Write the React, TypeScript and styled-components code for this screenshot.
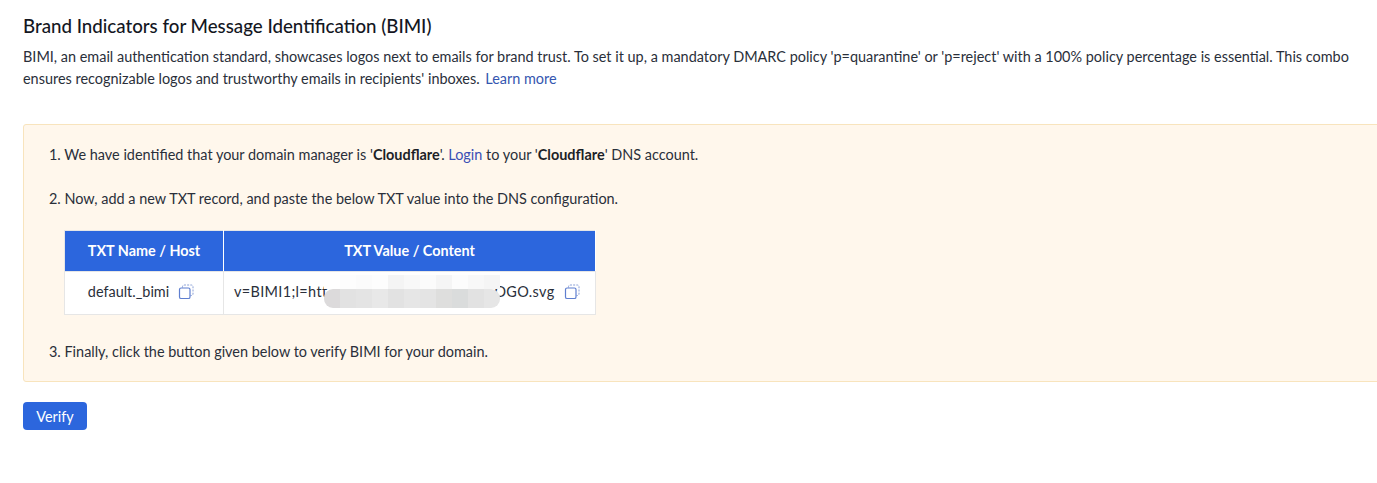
import styled, { createGlobalStyle } from "styled-components";

const GlobalStyle = createGlobalStyle`
  html, body {
    margin: 0;
    padding: 0;
    background: #fff;
    overflow: hidden;
  }
  body {
    font-family: Lato, "Open Sans", sans-serif;
    font-size: 14.45px;
    color: #2a2f3a;
  }
`;

// colours picked from the mosaic over the secret part of the value
const topTiles = ["#ffffff", "#fdfdfd", "#fbfbfb", "#fdfdfd", "#f4f4f4", "#f8f8f8", "#fbfbfb", "#f5f5f5", "#fcfcfc", "#f8f8f8", "#f5f5f5"];
const bottomTiles = ["#dcdadb", "#e2e2e2", "#e4e4e4", "#e8e8e8", "#e2e2e2", "#e6e6e6", "#e4e4e4", "#dededd", "#dadcdc", "#e2e2e2", "#e6e6e6"];

const CopyIcon = () => (
  <CopyGlyph width="16" height="16" viewBox="0 0 16 16" fill="none">
    <path
      d="M4.5 3.5V2.6C4.5 1.7 5.2 1 6.1 1H13.4C14.3 1 15 1.7 15 2.6V10C15 10.9 14.3 11.5 13.4 11.5H12.5"
      stroke="#8a9fd6"
      strokeWidth="1"
      strokeDasharray="2 1.2"
    />
    <rect x="1.5" y="4" width="10.5" height="10.5" rx="1.6" stroke="#5f7fd0" strokeWidth="1.2" />
  </CopyGlyph>
);

export default function App() {
  return (
    <Page>
      <GlobalStyle />
      <Title>Brand Indicators for Message Identification (BIMI)</Title>
      <Description>
        BIMI, an email authentication standard, showcases logos next to emails for brand trust. To set it up, a
        mandatory DMARC policy 'p=quarantine' or 'p=reject' with a 100% policy percentage is essential. This combo
        ensures recognizable logos and trustworthy emails in recipients' inboxes. <LearnMore href="#">Learn more</LearnMore>
      </Description>

      <Notice>
        <Step>
          1. We have identified that your domain manager is '<b>Cloudflare</b>'. <StepLink href="#">Login</StepLink> to
          your '<b>Cloudflare</b>' DNS account.
        </Step>
        <Step>2. Now, add a new TXT record, and paste the below TXT value into the DNS configuration.</Step>

        <RecordTable>
          <thead>
            <tr>
              <HeadCell $width={159}>TXT Name / Host</HeadCell>
              <HeadCell $width={372}>TXT Value / Content</HeadCell>
            </tr>
          </thead>
          <tbody>
            <tr>
              <BodyCell $centered>
                <CellRow $centered>
                  default._bimi
                  <CopyIcon />
                </CellRow>
              </BodyCell>
              <BodyCell>
                <ValueRow>
                  <span>v=BIMI1;l=htt</span>
                  <Masked />
                  <span>OGO.svg</span>
                  <CopyIcon />
                  <Mosaic aria-hidden>
                    <TileRow>
                      {topTiles.map((c, i) => (
                        <Tile key={i} style={{ background: c }} />
                      ))}
                    </TileRow>
                    <BottomRow>
                      {bottomTiles.map((c, i) => (
                        <Tile key={i} style={{ background: c }} />
                      ))}
                    </BottomRow>
                  </Mosaic>
                </ValueRow>
              </BodyCell>
            </tr>
          </tbody>
        </RecordTable>

        <LastStep>3. Finally, click the button given below to verify BIMI for your domain.</LastStep>
      </Notice>

      <VerifyButton>Verify</VerifyButton>
    </Page>
  );
}

const Page = styled.div`
  width: 1377px;
  height: 483px;
  box-sizing: border-box;
  padding: 14px 0 0 23px;
  overflow: hidden;
`;

const Title = styled.h2`
  margin: 0;
  font-size: 18.7px;
  line-height: 24px;
  font-weight: 500;
  color: #14171f;
`;

const Description = styled.p`
  margin: 8px 0 0;
  width: 1340px;
  line-height: 22px;
  color: #2a2f3a;
`;

const LearnMore = styled.a`
  margin-left: 2px;
  color: #3556b0;
  text-decoration: none;
`;

const Notice = styled.div`
  margin-top: 34px;
  width: 1380px;
  height: 258px;
  box-sizing: border-box;
  padding: 19px 0 0 25px;
  background: #fff7ec;
  border: 1px solid #f8e4bd;
  border-radius: 3px;

  b {
    font-weight: 700;
    color: #1c1f27;
  }
`;

const Step = styled.div`
  line-height: 22px;
  margin-bottom: 22px;
`;

const StepLink = styled.a`
  color: #3a4fb5;
  text-decoration: none;
`;

const LastStep = styled(Step)`
  margin: 26px 0 0;
`;

const RecordTable = styled.table`
  margin: -2px 0 0 15px;
  border-collapse: collapse;
  table-layout: fixed;
  width: 531px;
`;

const HeadCell = styled.th<{ $width: number }>`
  width: ${({ $width }) => $width}px;
  height: 41px;
  padding: 0 0 2px;
  box-sizing: border-box;
  background: #2c66dd;
  border: 1px solid #e6e6e6;
  border-right-color: #fff;
  color: #fff;
  font-size: 14.4px;
  font-weight: 700;
  text-align: center;
`;

const BodyCell = styled.td<{ $centered?: boolean }>`
  height: 43px;
  box-sizing: border-box;
  padding: 0 ${({ $centered }) => ($centered ? "6px" : "15px")} 3px ${({ $centered }) => ($centered ? "0" : "10px")};
  background: #fff;
  border: 1px solid #e6e6e6;
`;

const CellRow = styled.div<{ $centered?: boolean }>`
  display: flex;
  align-items: center;
  justify-content: ${({ $centered }) => ($centered ? "center" : "flex-start")};
  color: #2a2f3a;
`;

const ValueRow = styled(CellRow)`
  position: relative;
  letter-spacing: 0.35px;
`;

const Masked = styled.span`
  flex: none;
  width: 167px;
`;

const CopyGlyph = styled.svg`
  flex: none;
  margin-left: 9px;
`;

const Mosaic = styled.div`
  position: absolute;
  left: 90px;
  top: -8px;
  width: 176px;
  height: 33px;
  display: flex;
  flex-direction: column;
`;

const TileRow = styled.div`
  flex: 14;
  display: flex;
`;

const BottomRow = styled(TileRow)`
  flex: 18;
  border-radius: 9px;
  overflow: hidden;
`;

const Tile = styled.div`
  flex: 1;
`;

const VerifyButton = styled.button`
  display: block;
  margin-top: 20px;
  width: 64px;
  height: 28px;
  padding: 0;
  border: none;
  border-radius: 4px;
  background: #2c66dd;
  color: #fff;
  font-family: inherit;
  font-size: 14.4px;
`;
